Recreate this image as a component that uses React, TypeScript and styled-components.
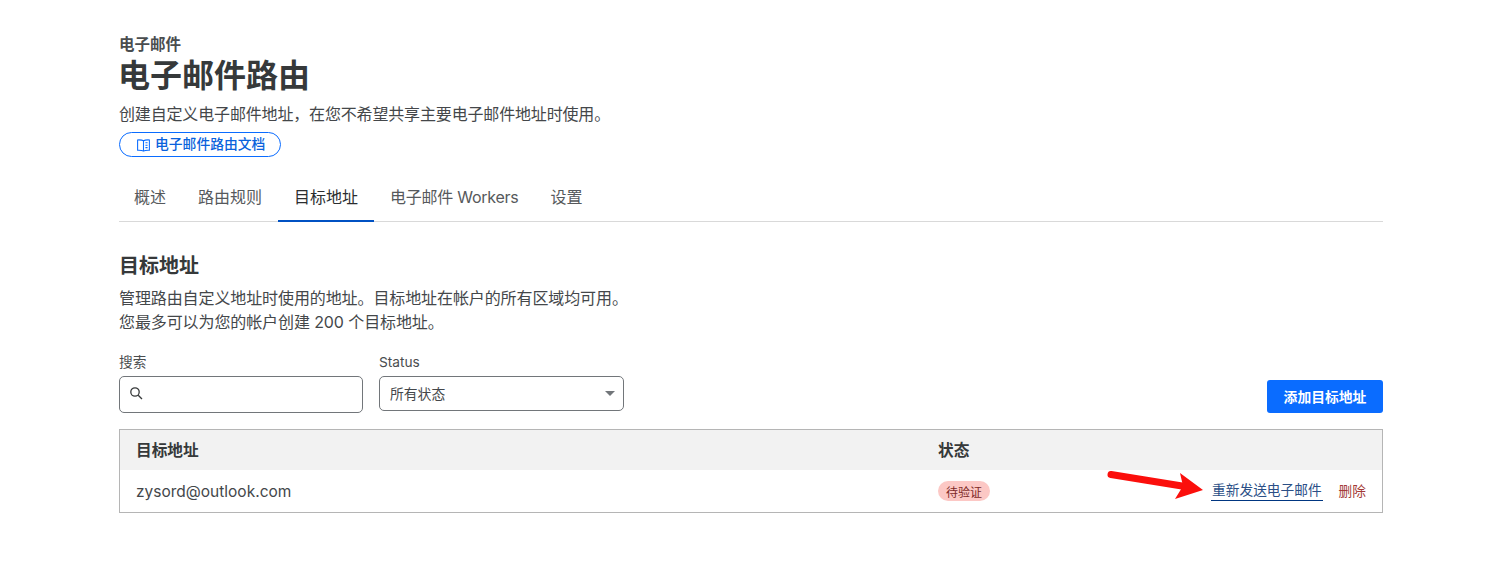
import React from "react";
import styled, { createGlobalStyle } from "styled-components";

const Global = createGlobalStyle`
  html, body { margin: 0; padding: 0; background: #fff; }
  body { font-family: Inter, "Noto Sans CJK SC", sans-serif; color: #36393a; }
  * { box-sizing: border-box; }
`;

const Page = styled.div`
  width: 1501px;
  height: 561px;
  padding: 34px 118px 0 119px;
  overflow: hidden;
`;
const Eyebrow = styled.div`
  font-size: 15.5px;
  font-weight: 700;
  line-height: 21px;
  color: #4a4d4f;
`;
const Title = styled.h1`
  margin: 0 0 0 -1px;
  font-size: 32px;
  font-weight: 700;
  line-height: 42px;
  color: #36393a;
`;
const Desc = styled.p`
  margin: 5px 0 0;
  font-size: 16px;
  letter-spacing: -0.16px;
  line-height: 24px;
  color: #44474a;
`;
const DocPill = styled.a`
  display: inline-flex;
  align-items: center;
  gap: 4px;
  height: 25px;
  width: 162px;
  margin-top: 6px;
  padding: 1px 0 0 16px;
  border: 1px solid #0a6cff;
  border-radius: 13px;
  color: #0a62dc;
  font-size: 13.8px;
  font-weight: 500;
  line-height: 1;
  svg { flex: none; }
`;
const Tabs = styled.nav`
  display: flex;
  height: 49px;
  margin-top: 16px;
  border-bottom: 1px solid #d9d9d9;
`;
const Tab = styled.div<{ $active?: boolean; $tight?: boolean }>`
  padding: 0 16px;
  height: 49px;
  line-height: 48px;
  font-size: 16px;
  letter-spacing: ${(p) => (p.$tight ? "-0.26px" : "0")};
  &:first-child { margin-left: -1px; }
  color: ${(p) => (p.$active ? "#2b2d2f" : "#56595c")};
  border-bottom: 2px solid ${(p) => (p.$active ? "#0051c3" : "transparent")};
  white-space: nowrap;
`;
const SectionTitle = styled.h2`
  margin: 31px 0 0;
  font-size: 20px;
  font-weight: 700;
  line-height: 26px;
  color: #36393a;
`;
const SectionDesc = styled.p`
  margin: 7px 0 0;
  font-size: 16px;
  letter-spacing: -0.1px;
  line-height: 24px;
  color: #44474a;
`;
const Filters = styled.div`
  display: flex;
  align-items: flex-start;
  margin-top: 18px;
`;
const Field = styled.div<{ $w: number; $mr: number }>`
  width: ${(p) => p.$w}px;
  margin-right: ${(p) => p.$mr}px;
`;
const Label = styled.div`
  font-size: 13.7px;
  line-height: 20px;
  color: #4a4d4f;
  margin-bottom: 4px;
`;
const inputBase = `
  display: flex;
  align-items: center;
  border: 1px solid #72767a;
  border-radius: 5px;
  background: #fff;
`;
const SearchBox = styled.div`
  ${inputBase}
  height: 37px;
  padding: 0 0 3px 9px;
`;
const SelectBox = styled.div`
  ${inputBase}
  height: 35px;
  padding: 0 8px 2px 10px;
  justify-content: space-between;
  font-size: 13.8px;
  color: #44474a;
`;
const Caret = styled.span`
  width: 0;
  height: 0;
  margin-top: 2px;
  border-left: 5px solid transparent;
  border-right: 5px solid transparent;
  border-top: 5px solid #72767a;
`;
const AddButton = styled.button`
  margin-left: auto;
  margin-top: 28px;
  width: 116px;
  height: 33px;
  border: 0;
  border-radius: 3px;
  background: #0a6cff;
  color: #fff;
  font-family: inherit;
  font-size: 13.8px;
  font-weight: 600;
  padding: 0 0 2px;
`;
const Table = styled.div`
  margin-top: 16px;
  border: 1px solid #b5b5b5;
`;
const Row = styled.div<{ $head?: boolean }>`
  position: relative;
  display: grid;
  grid-template-columns: 802px 1fr auto;
  align-items: center;
  height: ${(p) => (p.$head ? 40 : 42)}px;
  padding: 0 16px ${(p) => (p.$head ? 1 : 0)}px;
  background: ${(p) => (p.$head ? "#f2f2f2" : "#fff")};
`;
const Head = styled.div`
  font-size: 15.7px;
  font-weight: 700;
  color: #36393a;
`;
const Email = styled.div`
  font-size: 15.5px;
  color: #44474a;
`;
const Badge = styled.span`
  justify-self: start;
  display: inline-flex;
  align-items: center;
  height: 20px;
  padding: 0 8px;
  border-radius: 10px;
  background: #fcc8c5;
  color: #7d2a27;
  font-size: 12px;
`;
const Actions = styled.div`
  display: flex;
  align-items: center;
  gap: 16px;
  font-size: 13.7px;
  line-height: 18px;
`;
const Resend = styled.a`
  color: #2b4f86;
  padding: 0 1px 1px;
  margin-top: -1px;
  border-bottom: 1px solid #003681;
`;
const Del = styled.a`
  color: #a33a36;
  margin-top: -1px;
`;
const Arrow = styled.svg`
  position: absolute;
  left: 984px;
  top: -1px;
  pointer-events: none;
`;

export default function App() {
  return (
    <Page>
      <Global />
      <Eyebrow>电子邮件</Eyebrow>
      <Title>电子邮件路由</Title>
      <Desc>创建自定义电子邮件地址，在您不希望共享主要电子邮件地址时使用。</Desc>
      <DocPill>
        <svg width="15" height="15" viewBox="0 0 14 14" fill="none" stroke="#0a6cff" strokeWidth="1">
          <path d="M7 2.5C6 1.9 4 1.7 1.5 1.8v9.6C4 11.3 6 11.6 7 12.2c1-.6 3-.9 5.5-.8V1.8C10 1.7 8 1.9 7 2.5z" />
          <path d="M7 2.5v9.7M8.8 4.5h2M8.8 6.8h2M8.8 9h2" />
        </svg>
        电子邮件路由文档
      </DocPill>
      <Tabs>
        <Tab>概述</Tab>
        <Tab>路由规则</Tab>
        <Tab $active>目标地址</Tab>
        <Tab $tight>电子邮件 Workers</Tab>
        <Tab>设置</Tab>
      </Tabs>
      <SectionTitle>目标地址</SectionTitle>
      <SectionDesc>
        管理路由自定义地址时使用的地址。目标地址在帐户的所有区域均可用。
        <br />
        您最多可以为您的帐户创建 200 个目标地址。
      </SectionDesc>
      <Filters>
        <Field $w={244} $mr={16}>
          <Label>搜索</Label>
          <SearchBox>
            <svg width="15" height="15" viewBox="0 0 15 15" fill="none" stroke="#36393a" strokeWidth="1.3">
              <circle cx="6" cy="6" r="4.2" />
              <path d="M9.2 9.2 13 13" />
            </svg>
          </SearchBox>
        </Field>
        <Field $w={245} $mr={0}>
          <Label>Status</Label>
          <SelectBox>
            所有状态
            <Caret />
          </SelectBox>
        </Field>
        <AddButton>添加目标地址</AddButton>
      </Filters>
      <Table>
        <Row $head>
          <Head>目标地址</Head>
          <Head>状态</Head>
        </Row>
        <Row>
          <Email>zysord@outlook.com</Email>
          <Badge>待验证</Badge>
          <Actions>
            <Resend>重新发送电子邮件</Resend>
            <Del>删除</Del>
          </Actions>
          <Arrow width="100" height="34" viewBox="0 0 100 34">
            <path d="M7 5.5 L78 17" stroke="#fb0f0c" strokeWidth="7" strokeLinecap="round" fill="none" />
            <path d="M76 4 L99 21 L71 30 L79 17 Z" fill="#fb0f0c" />
          </Arrow>
        </Row>
      </Table>
    </Page>
  );
}
